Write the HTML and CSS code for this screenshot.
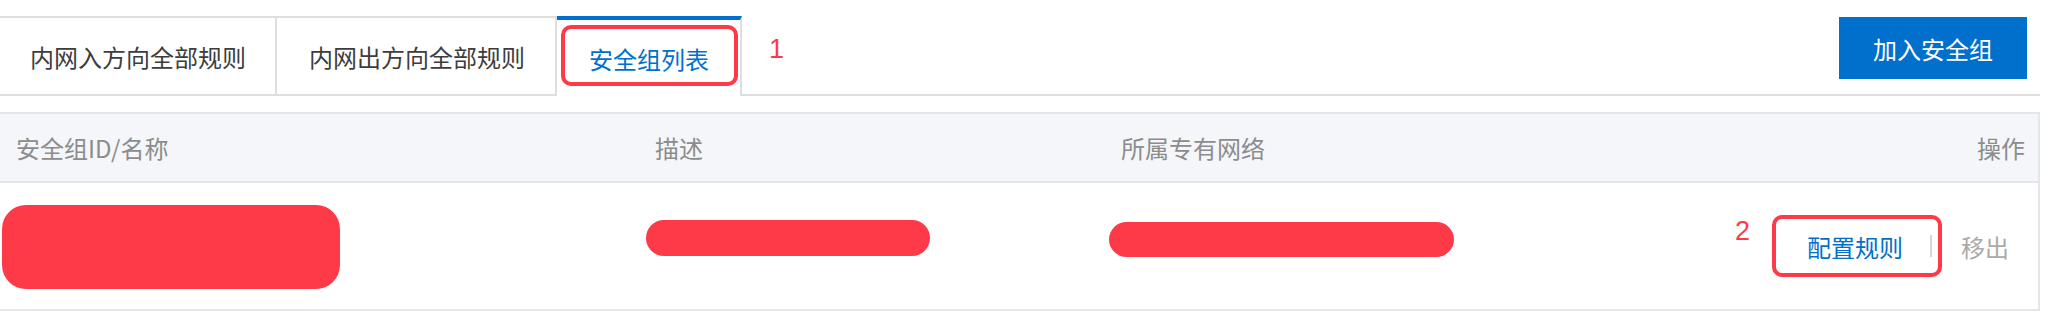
FILE: index.html
```html
<!DOCTYPE html>
<html lang="zh-CN">
<head>
    <meta charset="UTF-8">
    <title>安全组列表</title>
    <link rel="stylesheet" href="styles.css">
</head>
<body>
    <div class="page">
        <div class="toolbar">
            <ul class="tabs">
                <li class="tab">内网入方向全部规则</li>
                <li class="tab">内网出方向全部规则</li>
                <li class="tab active">
                    安全组列表
                    <span class="mark mark-tab"></span>
                </li>
            </ul>
            <span class="step step-one">1</span>
            <button class="btn-primary">加入安全组</button>
        </div>

        <div class="table">
            <div class="row head">
                <div class="cell">安全组ID/名称</div>
                <div class="cell">描述</div>
                <div class="cell">所属专有网络</div>
                <div class="cell cell-right">操作</div>
            </div>
            <div class="row body">
                <div class="cell"><span class="redact redact-name"></span></div>
                <div class="cell"><span class="redact redact-desc"></span></div>
                <div class="cell"><span class="redact redact-vpc"></span></div>
                <div class="cell cell-right">
                    <div class="actions">
                        <span class="step step-two">2</span>
                        <span class="mark-box">
                            <a class="link">配置规则</a>
                            <span class="sep"></span>
                        </span>
                        <a class="link link-disabled">移出</a>
                    </div>
                </div>
            </div>
        </div>
    </div>
</body>
</html>
```

FILE: styles.css
```css
body {
    margin: 0;
    background: #ffffff;
    font-family: "Noto Sans CJK SC", "Noto Sans", sans-serif;
    color: #333333;
}
.page {
    width: 2040px;
}

/* Tabs + action button */
.toolbar {
    display: flex;
    align-items: flex-end;
    padding-top: 16px;
    border-bottom: 2px solid #dedede;
}
.tabs {
    display: flex;
    align-items: flex-end;
    list-style: none;
    margin: 0;
    padding: 0;
}
.tab {
    position: relative;
    box-sizing: border-box;
    height: 78px;
    padding: 0 29px 0 30px;
    display: flex;
    align-items: center;
    border-top: 2px solid #dedede;
    border-right: 2px solid #dedede;
    font-size: 24px;
    color: #3d3d3d;
    background: #ffffff;
}
.tab:nth-child(2) {
    padding: 0 30px 0 32px;
}
.tab.active {
    height: 80px;
    margin-bottom: -2px;
    padding: 0 31px 0 32px;
    border-top: 4px solid #0070cc;
    color: #0070cc;
}
.mark {
    position: absolute;
    box-sizing: border-box;
    border: 4px solid #ff3a48;
    border-radius: 10px;
}
.mark-tab {
    left: 4px;
    right: 2px;
    top: 5px;
    bottom: 10px;
}
.step {
    color: #ff3a48;
    font-size: 27px;
    line-height: 1;
    font-family: "Liberation Sans", sans-serif;
}
.step-one {
    align-self: flex-start;
    margin: 20px 0 0 27px;
}
.btn-primary {
    align-self: flex-start;
    margin: 1px 13px 0 auto;
    width: 188px;
    height: 62px;
    border: none;
    background: #0070cc;
    color: #ffffff;
    font-family: inherit;
    font-size: 24px;
    cursor: pointer;
}

/* Table */
.table {
    margin-top: 16px;
    border-top: 2px solid #e3e7ec;
    border-right: 2px solid #e3e7ec;
}
.row {
    display: grid;
    grid-template-columns: 639px 466px 1fr 500px;
    align-items: center;
    border-bottom: 2px solid #e3e7ec;
}
.row.head {
    height: 67px;
    background: #f4f6f9;
    color: #8c8c8c;
    font-size: 24px;
}
.row.body {
    height: 126px;
}
.cell {
    padding-left: 16px;
}
.cell-right {
    text-align: right;
    padding-right: 13px;
}
.redact {
    display: block;
    background: #ff3a48;
}
.redact-name {
    width: 338px;
    height: 84px;
    margin: 2px 0 0 -14px;
    border-radius: 24px;
}
.redact-desc {
    width: 284px;
    height: 36px;
    margin: -17px 0 0 -9px;
    border-radius: 18px;
}
.redact-vpc {
    width: 345px;
    height: 35px;
    margin: -13px 0 0 -12px;
    border-radius: 18px;
}
.actions {
    display: flex;
    justify-content: flex-end;
    align-items: center;
    margin-right: 16px;
}
.step-two {
    margin: 0 22px 30px 0;
}
.mark-box {
    display: flex;
    align-items: center;
    box-sizing: border-box;
    height: 62px;
    padding: 0 6px 0 31px;
    border: 4px solid #ff3a48;
    border-radius: 10px;
}
.link {
    font-size: 24px;
    color: #0070cc;
    cursor: pointer;
}
.sep {
    width: 2px;
    height: 22px;
    margin-left: 27px;
    background: #d6d6d6;
}
.link-disabled {
    margin-left: 19px;
    color: #aaaaaa;
}
```
